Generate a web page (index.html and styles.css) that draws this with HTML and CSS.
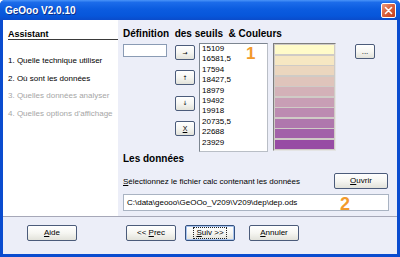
FILE: index.html
```html
<!DOCTYPE html>
<html lang="fr">
<head>
<meta charset="utf-8">
<title>GeOoo V2.0.10</title>
<link rel="stylesheet" href="styles.css">
</head>
<body>
<div class="window">
  <div class="titlebar">
    <span class="title">GeOoo V2.0.10</span>
    <span class="close"><svg width="9" height="9" viewBox="0 0 9 9"><path d="M1.5 1.5 L7.5 7.5 M7.5 1.5 L1.5 7.5" stroke="#fff" stroke-width="1.6" stroke-linecap="round"/></svg></span>
  </div>
  <div class="frame">
    <div class="main">
      <aside class="sidebar">
        <div class="side-head">Assistant</div>
        <ul class="steps">
          <li>1. Quelle technique utiliser</li>
          <li>2. Où sont les données</li>
          <li class="off">3. Quelles données analyser</li>
          <li class="off">4. Quelles options d'affichage</li>
        </ul>
      </aside>
      <section class="content">
        <h2 class="heading">Définition&nbsp; des seuils&nbsp; &amp; Couleurs</h2>
        <div class="thresholds">
          <input class="value-input" type="text" value="">
          <div class="arrows">
            <button class="btn arrow-btn">→</button>
            <button class="btn arrow-btn">↑</button>
            <button class="btn arrow-btn">↓</button>
            <button class="btn arrow-btn x-btn"><u>X</u></button>
          </div>
          <div class="list">
            <div>15109</div>
            <div>16581,5</div>
            <div>17594</div>
            <div>18427,5</div>
            <div>18979</div>
            <div>19492</div>
            <div>19918</div>
            <div>20735,5</div>
            <div>22688</div>
            <div>23929</div>
            <span class="badge badge-1">1</span>
          </div>
          <div class="swatches">
            <div class="swatch s1"></div>
            <div class="swatch s2"></div>
            <div class="swatch s3"></div>
            <div class="swatch s4"></div>
            <div class="swatch s5"></div>
            <div class="swatch s6"></div>
            <div class="swatch s7"></div>
            <div class="swatch s8"></div>
            <div class="swatch s9"></div>
            <div class="swatch s10"></div>
          </div>
          <button class="btn dots">...</button>
        </div>
        <h2 class="heading data">Les données</h2>
        <div class="file-row">
          <span><u>S</u>électionnez le fichier calc contenant les données</span>
          <button class="btn open"><span><u>O</u>uvrir</span></button>
        </div>
        <div class="path">C:\data\geooo\GeOOo_V209\V209\dep\dep.ods<span class="badge badge-2">2</span></div>
      </section>
    </div>
    <div class="footer">
      <button class="btn fbtn aide"><span><u>A</u>ide</span></button>
      <button class="btn fbtn prec"><span>&lt;&lt; <u>P</u>rec</span></button>
      <button class="btn fbtn suiv"><span class="focus"><u>S</u>uiv &gt;&gt;</span></button>
      <button class="btn fbtn annuler"><span><u>A</u>nnuler</span></button>
    </div>
  </div>
</div>
</body>
</html>
```

FILE: styles.css
```css
html, body {
  margin: 0;
  padding: 0;
}
body {
  width: 400px;
  height: 257px;
  overflow: hidden;
  background: #fff;
  font-family: "Liberation Sans", Arial, sans-serif;
  font-size: 8px;
  color: #000;
}
.window {
  width: 400px;
  height: 257px;
  display: flex;
  flex-direction: column;
  background: #0A4CCF;
  border-radius: 5px 5px 0 0;
  overflow: hidden;
}
.titlebar {
  height: 20px;
  flex: none;
  display: flex;
  align-items: center;
  justify-content: space-between;
  padding: 0 4px 0 5px;
  background: linear-gradient(#4A94F8 0%, #1C6CEA 12%, #0B5CE0 45%, #0756DA 80%, #0A4CCB 100%);
  color: #fff;
  font-weight: bold;
  font-size: 10px;
  text-shadow: 1px 1px 0 #0B2F8A;
}
.close {
  width: 15px;
  height: 15px;
  box-sizing: border-box;
  border: 1px solid #fff;
  border-radius: 2px;
  background: linear-gradient(135deg, #EE9A7C 0%, #DA6440 45%, #C53E1C 100%);
  display: flex;
  align-items: center;
  justify-content: center;
}
.close svg { display: block; }
.frame {
  flex: 1;
  display: flex;
  flex-direction: column;
  margin: 0 3px 3px 3px;
  background: #ECEEF8;
}
.main {
  height: 196px;
  flex: none;
  display: flex;
}
.sidebar {
  width: 115px;
  flex: none;
  box-sizing: border-box;
  background: #fff;
  padding: 9px 0 0 5px;
}
.side-head {
  font-weight: bold;
  font-size: 9px;
  line-height: 10px;
  border-bottom: 1px solid #3A3A3A;
}
.steps {
  list-style: none;
  margin: 12px 0 0 0;
  padding: 0;
}
.steps li {
  line-height: 17.7px;
  white-space: nowrap;
}
.steps li.off {
  color: #A6A6A6;
}
.content {
  flex: 1;
  display: flex;
  flex-direction: column;
  padding: 8px 8px 0 5px;
}
.heading {
  margin: 0;
  font-size: 10px;
  font-weight: bold;
  line-height: 12px;
  white-space: nowrap;
}
.heading.data {
  margin-top: 1px;
}
.thresholds {
  display: flex;
  align-items: flex-start;
  margin-top: 3px;
  height: 109px;
}
.value-input {
  width: 44px;
  height: 13px;
  margin: 1px 0 0 0;
  padding: 0;
  box-sizing: border-box;
  border: 1px solid #8A9BB4;
  background: #fff;
  font: inherit;
}
.arrows {
  display: flex;
  flex-direction: column;
  gap: 10.3px;
  margin-left: 8px;
  padding-top: 2px;
}
.btn {
  box-sizing: border-box;
  margin: 0;
  padding: 0;
  border: 1px solid #4B5B7A;
  border-radius: 2px;
  background: linear-gradient(#FFFFFF 0%, #F6F6F2 50%, #E2E2DA 100%);
  font-family: "Liberation Sans", Arial, sans-serif;
  font-size: 8px;
  line-height: 1;
  color: #000;
  display: flex;
  align-items: center;
  justify-content: center;
  white-space: nowrap;
}
.arrow-btn {
  width: 20px;
  height: 15px;
  font-family: "DejaVu Sans", sans-serif;
  font-size: 6px;
}
.x-btn {
  font-family: "Liberation Sans", Arial, sans-serif;
  font-size: 7px;
}
.list {
  position: relative;
  margin-left: 4px;
  width: 69px;
  height: 109px;
  box-sizing: border-box;
  border: 1px solid;
  border-color: #7C8590 #B9BEC6 #B9BEC6 #7C8590;
  background: #fff;
  padding: 0 0 0 2px;
  line-height: 10.4px;
}
.badge {
  position: absolute;
  color: #F29A2C;
  font-weight: bold;
  line-height: 1;
}
.badge-1 {
  left: 46px;
  top: 1px;
  font-size: 17px;
}
.badge-2 {
  left: 216px;
  top: 0px;
  font-size: 18px;
}
.swatches {
  margin-left: 5px;
  width: 63px;
  height: 108px;
  box-sizing: border-box;
  border: 1px solid;
  border-color: #7E7E7E #E4E4E4 #E4E4E4 #7E7E7E;
  padding: 1px;
  background: #CFCBC6;
  display: flex;
  flex-direction: column;
  gap: 1.5px;
}
.swatch {
  flex: 1;
}
.s1 { background: #FFFBC9; }
.s2 { background: #F6E7C2; }
.s3 { background: #EBD6BE; }
.s4 { background: #DFC4BB; }
.s5 { background: #D3B1B8; }
.s6 { background: #C89EB5; }
.s7 { background: #BC8BB1; }
.s8 { background: #AF77AD; }
.s9 { background: #A262A9; }
.s10 { background: #974CA4; }
.dots {
  width: 20px;
  height: 15px;
  margin-left: 19px;
  margin-top: 1px;
}
.file-row {
  display: flex;
  justify-content: space-between;
  align-items: center;
  height: 16px;
  margin-top: 8px;
}
.open {
  width: 54px;
  height: 16px;
  margin-right: 1px;
}
.path {
  position: relative;
  margin-top: 5px;
  height: 17px;
  box-sizing: border-box;
  border: 1px solid #A9B3C2;
  background: #fff;
  padding-left: 3px;
  line-height: 15px;
  white-space: nowrap;
}
.footer {
  flex: 1;
  display: flex;
  align-items: flex-start;
  border-top: 1px solid #A6A8B8;
  padding: 8px 0 0 24px;
}
.fbtn {
  width: 50px;
  height: 16px;
}
.prec { margin-left: 49px; }
.suiv {
  margin-left: 9px;
  border-color: #33507F;
  box-shadow: inset 0 0 0 1px #A9C4EE;
}
.focus {
  outline: 1px dotted #222;
  padding: 1px 2px;
}
.annuler { margin-left: 14px; }
```
